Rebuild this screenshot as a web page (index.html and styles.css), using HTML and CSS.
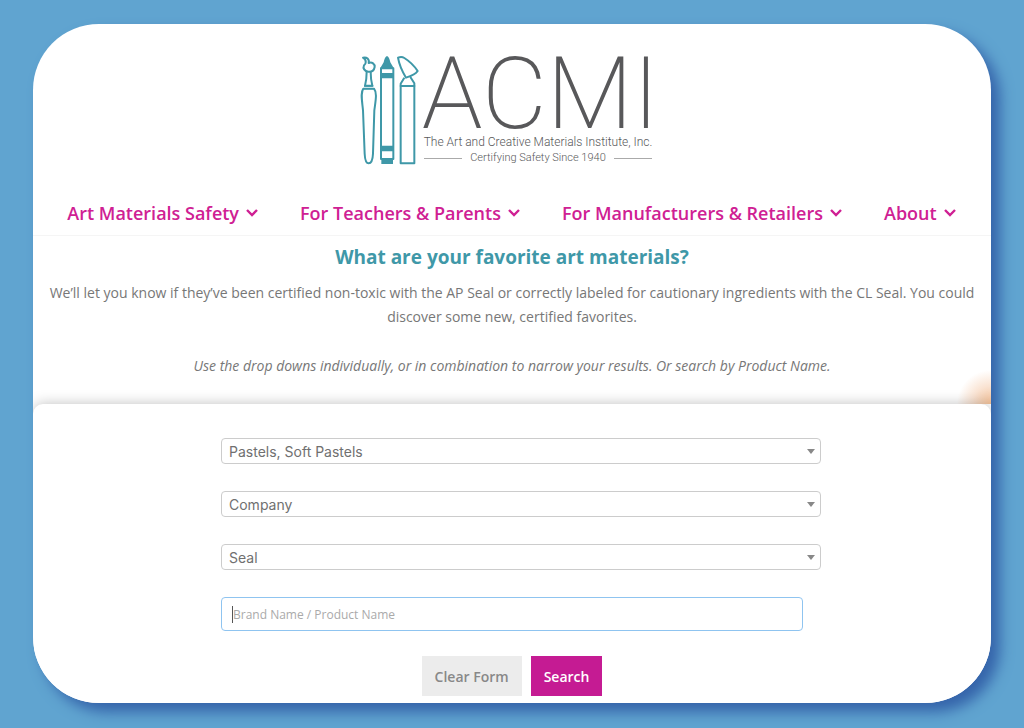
FILE: index.html
```html
<!DOCTYPE html>
<html lang="en">
<head>
<meta charset="utf-8">
<meta name="viewport" content="width=device-width, initial-scale=1">
<title>ACMI – Certified Product Search</title>
<link rel="stylesheet" href="styles.css">
</head>
<body>
<div class="card">
  <header class="header">
    <a class="logo" href="#" aria-label="ACMI home">
      <svg class="logo-tools" viewBox="30 30 180 330" fill="none" stroke="#3f98a8" stroke-width="6" stroke-linejoin="round" aria-hidden="true">
        <path d="M39 38C50 35 59 43 56 54C66 49 75 58 74 66C72 77 64 81 55 80C43 79 38 69 42 61C48 57 51 45 39 38Z"/>
        <path d="M50 80Q50 104 45 122H67Q62 104 62 80"/>
        <path d="M42 123H70M41 131H72" stroke-width="4"/>
        <path d="M40 131C31 143 36 166 39 196L44 326C45 349 51 355 56 355C62 355 68 349 69 326L73 196C77 166 82 143 72 131Z"/>
        <path d="M101 52Q104 36 111 33Q118 36 121 52L131 69H91Z" fill="#3f98a8" stroke="none"/>
        <rect x="93" y="70" width="37" height="272"/>
        <path d="M91 84H132V100H91ZM91 302H132V319H91ZM94 341H129V357H94Z" fill="#3f98a8" stroke="none"/>
        <path d="M144 38Q155 34 163 39Q187 54 203 78Q196 89 168 98Q149 67 144 38Z"/>
        <path d="M163 98L152 116V123H193V115L181 96"/>
        <rect x="152" y="123" width="41" height="232"/>
      </svg>
      <span class="logo-words">
        <span class="logo-name">ACMI</span>
        <span class="logo-full">The Art and Creative Materials Institute, Inc.</span>
        <span class="logo-motto">Certifying Safety Since 1940</span>
      </span>
    </a>
    <nav class="nav">
      <a href="#">Art Materials Safety <svg class="chevron" viewBox="0 0 14 10"><path d="M2 2L7 7L12 2"/></svg></a>
      <a href="#">For Teachers &amp; Parents <svg class="chevron" viewBox="0 0 14 10"><path d="M2 2L7 7L12 2"/></svg></a>
      <a href="#">For Manufacturers &amp; Retailers <svg class="chevron" viewBox="0 0 14 10"><path d="M2 2L7 7L12 2"/></svg></a>
      <a href="#">About <svg class="chevron" viewBox="0 0 14 10"><path d="M2 2L7 7L12 2"/></svg></a>
    </nav>
  </header>
  <section class="intro">
    <h1>What are your favorite art materials?</h1>
    <p>We’ll let you know if they’ve been certified non-toxic with the AP Seal or correctly labeled for cautionary ingredients with the CL Seal. You could discover some new, certified favorites.</p>
    <p class="hint">Use the drop downs individually, or in combination to narrow your results. Or search by Product Name.</p>
  </section>
  <form class="search">
    <div class="fields">
      <select class="field" aria-label="Product category"><option>Pastels, Soft Pastels</option></select>
      <select class="field" aria-label="Company"><option>Company</option></select>
      <select class="field" aria-label="Seal"><option>Seal</option></select>
      <div class="name-box">
        <input class="name" type="text" aria-label="Brand name or product name" placeholder="Brand Name / Product Name">
        <span class="caret"></span>
      </div>
    </div>
    <div class="actions">
      <button class="button clear" type="reset">Clear Form</button>
      <button class="button submit" type="submit">Search</button>
    </div>
  </form>
</div>
</body>
</html>
```
FILE: styles.css
```css
* {
  box-sizing: border-box;
}

body {
  margin: 0;
  min-height: 100vh;
  padding: 24px 33px 25px;
  background: #60a4d0;
  font-family: "Open Sans", "Noto Sans", sans-serif;
  color: #777;
}

.card {
  overflow: hidden;
  border-radius: 66px;
  background: #fff;
  box-shadow: 9px 9px 14px #3564aa;
}

.header {
  display: flex;
  flex-direction: column;
  align-items: center;
  padding-top: 31px;
  border-bottom: 1px solid #f5f5f5;
}

.logo {
  display: flex;
  gap: 4px;
  padding-right: 12px;
  color: #58585a;
  font-family: Roboto, sans-serif;
  text-decoration: none;
}

.logo-tools {
  width: 60px;
  height: 110px;
}

.logo-words {
  display: flex;
  flex-direction: column;
}

.logo-name {
  margin: 0 -8px 0 -2px;
  font-size: 100px;
  font-weight: 200;
  line-height: 78px;
}

.logo-full {
  margin-top: 1px;
  font-size: 12px;
  font-weight: 300;
  line-height: 16px;
  white-space: nowrap;
}

.logo-motto {
  display: flex;
  align-items: center;
  gap: 8px;
  font-size: 11px;
  font-weight: 300;
  line-height: 16px;
  white-space: nowrap;
}

.logo-motto::before,
.logo-motto::after {
  content: "";
  flex: 1;
  height: 1px;
  background: #aaa;
}

.nav {
  display: flex;
  justify-content: center;
  gap: 41px;
  padding: 35px 0 10px;
}

.nav a {
  display: flex;
  align-items: center;
  gap: 6px;
  color: #cf2093;
  font-size: 18px;
  font-weight: 600;
  line-height: 24px;
  text-decoration: none;
  white-space: nowrap;
}

.chevron {
  width: 14px;
  height: 10px;
  fill: none;
  stroke: currentColor;
  stroke-width: 2.4;
}

.intro {
  padding: 7px 16px 26px;
  background: radial-gradient(circle at 100% 100%, #f0bd94 0, #fae3d2 18px, transparent 34px);
  text-align: center;
}

.intro h1 {
  margin: 0 0 10px;
  color: #3f98a8;
  font-size: 19px;
  line-height: 28px;
}

.intro p {
  margin: 0;
  font-size: 14px;
  line-height: 24px;
}

.intro .hint {
  margin-top: 25px;
  font-style: italic;
}

.search {
  position: relative;
  padding: 34px 24px 7px;
  border-radius: 10px 10px 0 0;
  background: #fff;
  box-shadow: 0 0 14px rgba(0, 0, 0, 0.25);
}

.fields {
  display: flex;
  flex-direction: column;
  gap: 27px;
  width: 68%;
  max-width: 618px;
  margin: 0 auto;
  padding-left: 18px;
}

.field {
  width: 100%;
  height: 26px;
  padding: 0 7px;
  appearance: none;
  border: 1px solid #ccc;
  border-radius: 4px;
  background: #fff url("data:image/svg+xml,%3Csvg xmlns='http://www.w3.org/2000/svg' width='8' height='5'%3E%3Cpath d='M0 0H8L4 5Z' fill='%23888'/%3E%3C/svg%3E") no-repeat right 5px center;
  color: #707070;
  font-family: Inter, sans-serif;
  font-size: 14px;
}

.name-box {
  position: relative;
  width: 97%;
}

.name {
  display: block;
  width: 100%;
  height: 34px;
  padding: 0 11px;
  border: 1px solid #8fc4f0;
  border-radius: 4px;
  outline: 0;
  font-family: inherit;
  font-size: 12px;
}

.name::placeholder {
  color: #aaa;
}

.caret {
  position: absolute;
  top: 9px;
  left: 11px;
  width: 1px;
  height: 17px;
  background: #555;
}

.actions {
  display: flex;
  justify-content: center;
  gap: 9px;
  margin-top: 25px;
}

.button {
  height: 40px;
  padding: 0 13px;
  border: 0;
  font-family: inherit;
  font-size: 14px;
  font-weight: 600;
}

.clear {
  background: #ececec;
  color: #888;
}

.submit {
  background: #c51b93;
  color: #fff;
}
```
